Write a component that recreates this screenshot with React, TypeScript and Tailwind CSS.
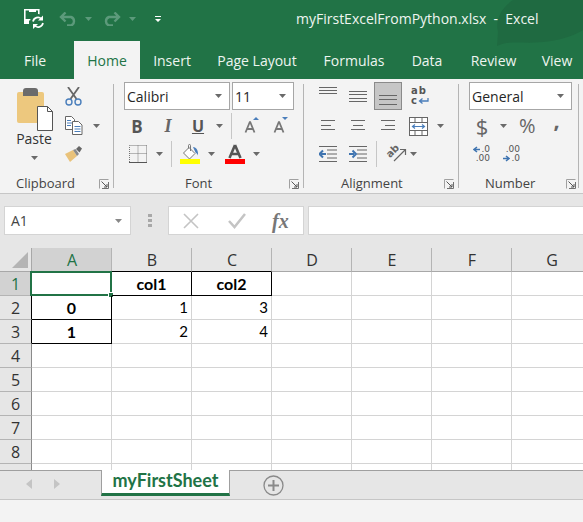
import React from 'react';

const columns = ['A', 'B', 'C', 'D', 'E', 'F', 'G'];
const tabs = [
  { label: 'File', width: 'w-[74px] pr-[4px]' },
  { label: 'Home', width: 'w-[66px]', active: true },
  { label: 'Insert', width: 'w-[64px]' },
  { label: 'Page Layout', width: 'w-[106px]' },
  { label: 'Formulas', width: 'w-[88px]' },
  { label: 'Data', width: 'w-[58px]' },
  { label: 'Review', width: 'w-[75px]' },
  { label: 'View', width: 'w-[52px]' },
];

// cell content per row, col index 0..6
const rows: Record<number, Record<number, { text: string; bold?: boolean; right?: boolean }>> = {
  1: { 1: { text: 'col1', bold: true }, 2: { text: 'col2', bold: true } },
  2: { 0: { text: '0', bold: true }, 1: { text: '1', right: true }, 2: { text: '3', right: true } },
  3: { 0: { text: '1', bold: true }, 1: { text: '2', right: true }, 2: { text: '4', right: true } },
};

const hasBlackEdge = (r: number, c: number) => (r === 1 && (c === 1 || c === 2)) || (c === 0 && (r === 2 || r === 3));

const Caret = ({ color = '#6a6a6a' }: { color?: string }) => (
  <svg width="7" height="4" viewBox="0 0 7 4" className="block">
    <path d="M0 0h7L3.5 4z" fill={color} />
  </svg>
);

const Launcher = () => (
  <svg width="10" height="10" viewBox="0 0 10 10" className="block">
    <path d="M.5 9.5v-9h9" fill="none" stroke="#a0a0a0" />
    <path d="M9.5 3v6.5H3" fill="none" stroke="#707070" />
    <path d="M2.500 2.500l5.500 5.500M8 5v3H5" fill="none" stroke="#555" />
  </svg>
);

const Separator = () => <div className="w-px h-[26px] bg-[#c6c6c6]" />;

const Group = ({ width, label, pad, children }: { width: string; label: string; pad: string; children: React.ReactNode }) => (
  <div className={`flex flex-col shrink-0 border-r border-[#b4b4b4] my-[5px] ${width}`}>
    <div className="h-[92px] shrink-0 -mt-[2px]">{children}</div>
    <div className={`flex items-center justify-between h-[19px] shrink-0 text-[13px] leading-none text-[#444] ${pad}`}>
      <span>{label}</span>
      <Launcher />
    </div>
  </div>
);

const Select = ({ width, text }: { width: string; text: string }) => (
  <div className={`flex items-center justify-between h-[28px] bg-white border border-[#a6a6a6] pl-[2px] pr-[7px] text-[14px] text-[#262626] ${width}`}>
    <span>{text}</span>
    <Caret />
  </div>
);

// each line is [y, x, width]
const Lines = ({ lines, width = 18, height = 24 }: { lines: [number, number, number][]; width?: number; height?: number }) => (
  <svg width={width} height={height} viewBox={`0 0 ${width} ${height}`} className="block">
    {lines.map(([y, x, w], i) => (
      <rect key={i} x={x} y={y} width={w} height="1" fill="#666" />
    ))}
  </svg>
);

const Scissors = () => (
  <svg width="18" height="19" viewBox="0 0 18 19" className="block">
    <path d="M3 0l8.500 12M14 0L5.500 12" stroke="#666" strokeWidth="1.800" fill="none" />
    <circle cx="4" cy="15" r="3" fill="none" stroke="#4a7ebb" strokeWidth="1.400" />
    <circle cx="13" cy="15" r="3" fill="none" stroke="#4a7ebb" strokeWidth="1.400" />
  </svg>
);

const CopyIcon = () => (
  <svg width="18" height="19" viewBox="0 0 18 19" className="block">
    <path d="M.5.5h6l3 3v10H.5z" fill="#fff" stroke="#666" />
    <path d="M7.500 5.500h6l3.500 3.500v9.500H7.500z" fill="#fff" stroke="#666" />
    <path d="M2 4.500h4M2 7h5M2 9.500h4" stroke="#4a7ebb" />
    <path d="M9.500 10.500h6M9.500 13h6M9.500 15.500h6" stroke="#4a7ebb" />
  </svg>
);

const Painter = () => (
  <svg width="18" height="17" viewBox="0 0 18 17" className="block">
    <path d="M0 8l5 8 7-6-4-6z" fill="#e9c27a" />
    <path d="M8 4l4 6 2-2-3.500-5z" fill="#8a8a8a" />
    <path d="M11 3l3-3 3 2.500-2.500 4z" fill="#666" />
  </svg>
);

const Borders = () => (
  <svg width="18" height="18" viewBox="0 0 18 18" className="block">
    <path d="M.5.5h17M.5 17V.5M17.500.5V17M.5 8.500h17M9 .5V17" stroke="#777" strokeDasharray="1 1" fill="none" />
    <path d="M0 17.500h18" stroke="#555" />
  </svg>
);

const FillColor = () => (
  <svg width="20" height="20" viewBox="0 0 20 20" className="block">
    <path d="M9 3.500l6 6-5.500 5.500L3.500 9z" fill="#fff" stroke="#777" />
    <path d="M8.500 4.500V1.500a1 1 0 012 0V7" fill="none" stroke="#777" />
    <path d="M13 3c3.500 .5 5.500 3.500 5 8.500-.8-2-1.500-2.500-2.500-3z" fill="#4a7ebb" />
    <rect y="15" width="20" height="5" fill="#ffff00" />
  </svg>
);

const FontColor = () => (
  <svg width="20" height="20" viewBox="0 0 20 20" className="block">
    <path d="M10 1l5.500 13M10 1L4.500 14M6.500 10h7" stroke="#555" strokeWidth="2.600" fill="none" />
    <rect y="15" width="20" height="5" fill="#ff0000" />
  </svg>
);

const GrowFont = ({ up }: { up?: boolean }) => (
  <svg width="18" height="18" viewBox="0 0 18 18" className="block">
    <path d="M6 4.500L1.500 15.500M6 4.500l4.500 11M3.500 12h5" stroke="#777" strokeWidth="1.800" fill="none" />
    {up ? <path d="M9 3l3-3 3 3z" fill="#4a7ebb" /> : <path d="M9 0h6l-3 3z" fill="#4a7ebb" />}
  </svg>
);

const WrapText = () => (
  <div className="relative w-[18px] h-[20px] mt-[4px] font-['DejaVu_Sans',sans-serif] text-[10px] leading-[10px] font-bold text-[#555]">
    <div className="tracking-[1px]">ab</div>
    <div>c</div>
    <svg width="11" height="7" viewBox="0 0 11 7" className="absolute right-0 bottom-[1px]">
      <path d="M10 0v3H2M4.500 .5L1.500 3l3 2.500" fill="none" stroke="#4a7ebb" strokeWidth="1.300" />
    </svg>
  </div>
);

const MergeIcon = () => (
  <svg width="19" height="19" viewBox="0 0 19 19" className="block">
    <rect x=".5" y=".5" width="18" height="18" fill="#fff" stroke="#666" />
    <path d="M0 5.500h19M0 13.500h19M6 0v5.500M13 0v5.500M6 13.500V19M13 13.500V19" stroke="#666" />
    <path d="M3.500 9.500h12M6 7.500l-2.500 2 2.500 2M13 7.500l2.500 2-2.500 2" fill="none" stroke="#4a7ebb" strokeWidth="1.200" />
  </svg>
);

const Indent = ({ flip }: { flip?: boolean }) => (
  <svg width="18" height="16" viewBox="0 0 18 16" className="block">
    <path d="M0 .5h18M8 4h10M8 8h10M8 12h10M0 15.500h18" stroke="#666" />
    {flip ? (
      <path d="M0 8h5M3.500 4.500L7 8l-3.500 3.500" fill="none" stroke="#3f74b0" strokeWidth="2" />
    ) : (
      <path d="M7 8H2M4 4.500L.5 8 4 11.500" fill="none" stroke="#3f74b0" strokeWidth="2" />
    )}
  </svg>
);

const Orientation = () => (
  <svg width="20" height="20" viewBox="0 0 20 20" className="block overflow-visible">
    <text x="0" y="11" fontSize="10" fontWeight="bold" fill="#666" fontFamily="DejaVu Sans, sans-serif" transform="rotate(-45 6 8)">ab</text>
    <path d="M8 17L19 6M14 5.500h5.500V11" fill="none" stroke="#666" strokeWidth="1.200" />
  </svg>
);

const Decimal = ({ increase }: { increase?: boolean }) => (
  <div className="flex flex-col items-end w-[16px] text-[9px] leading-[9px] font-['DejaVu_Sans',sans-serif] text-[#555]">
    <div className="flex items-center gap-[1px] h-[9px]">
      {!increase && (
        <svg width="7" height="7" viewBox="0 0 7 7">
          <path d="M7 3.500H1.500M4 1L1 3.500 4 6" fill="none" stroke="#3f74b0" strokeWidth="1.500" />
        </svg>
      )}
      <span>{increase ? '.00' : '.0'}</span>
    </div>
    <div className="flex items-center gap-[1px] h-[9px]">
      {increase && (
        <svg width="7" height="7" viewBox="0 0 7 7">
          <path d="M0 3.500h5.500M3 1l3 2.500L3 6" fill="none" stroke="#3f74b0" strokeWidth="1.500" />
        </svg>
      )}
      <span>{increase ? '.0' : '.00'}</span>
    </div>
  </div>
);

const Quick = () => (
  <div className="flex items-center h-[41px] pl-[24px] pb-[4px]">
    <svg width="20" height="20" viewBox="0 0 20 20" className="block">
      <path d="M.8.8h14v10H.8z" fill="none" stroke="#fff" strokeWidth="1.600" />
      <path d="M0 10h5v5H0zM5 0h7v3H5z" fill="#fff" />
      <circle cx="14" cy="13" r="8" fill="#217346" />
      <path d="M9 12.500a5 5 0 018.500-2.500M19 14a5 5 0 01-8.500 2.500" fill="none" stroke="#fff" strokeWidth="1.700" />
      <path d="M19 6.500v5h-5zM9 20v-5h5z" fill="#fff" />
    </svg>
    <svg width="18" height="14" viewBox="0 0 18 14" className="block ml-[15px]">
      <path d="M2 5h10a4.500 4.500 0 010 8.500H8M6.500 .5L2 5l4.500 4.500" fill="none" stroke="#5c9a7b" strokeWidth="2.400" />
    </svg>
    <div className="ml-[8px]"><Caret color="#5c9a7b" /></div>
    <svg width="18" height="14" viewBox="0 0 18 14" className="block ml-[11px]">
      <path d="M16 5H6a4.500 4.500 0 000 8.500h4M11.500 .5L16 5l-4.500 4.500" fill="none" stroke="#5c9a7b" strokeWidth="2.400" />
    </svg>
    <div className="ml-[8px]"><Caret color="#5c9a7b" /></div>
    <svg width="6" height="7" viewBox="0 0 6 7" className="block ml-[19px] mt-[1px]">
      <path d="M0 0h6v1H0zM0 3h6L3 6z" fill="#fff" />
    </svg>
  </div>
);

const Cell = ({ r, c }: { r: number; c: number }) => {
  const cell = rows[r]?.[c];
  const selected = r === 1 && c === 0;
  return (
    <div
      className={`relative flex items-center border-r border-b px-[3px] leading-none text-black font-['Lato',sans-serif]
        ${hasBlackEdge(r, c) ? 'border-r-black border-b-black' : 'border-r-[#d4d4d4] border-b-[#d4d4d4]'}
        ${cell?.right ? 'justify-end' : 'justify-center'}
        ${cell?.bold ? 'font-bold text-[16px]' : 'text-[15px]'}`}
    >
      {cell?.text}
      {selected && (
        <>
          <div className="absolute -left-[2px] -top-[1px] w-[82px] h-[25px] border-2 border-[#217346]" />
          <div className="absolute -right-[3px] -bottom-[3px] w-[6px] h-[6px] bg-[#217346] border border-white" />
        </>
      )}
    </div>
  );
};

export default function App() {
  return (
    <div className="flex flex-col w-[583px] h-[522px] overflow-hidden bg-[#f3f3f3] font-['Open_Sans',sans-serif]">
      {/* title + tabs */}
      <div className="relative h-[79px] bg-[#217346] shrink-0 overflow-hidden">
        <svg width="100" height="50" viewBox="0 0 100 50" className="absolute right-0 top-0">
          <path d="M30 0C18 8 12 20 15 32l-1 14c11-6 26-2 46-4 18-2 30-6 40-12V0z" fill="#1f6a41" />
        </svg>
        <div className="relative flex h-[41px]">
          <div className="w-[296px]"><Quick /></div>
          <div className="pt-[9px] text-[14px] leading-[20px] text-[#eef5f0] whitespace-pre">myFirstExcelFromPython.xlsx  -  Excel</div>
        </div>
        <div className="relative flex h-[38px]">
          {tabs.map((t) => (
            <div
              key={t.label}
              className={`flex items-center justify-center shrink-0 text-[14px] ${t.width} ${t.active ? 'bg-[#f3f3f3] text-[#217346]' : 'text-[#eef5f0]'}`}
            >
              {t.label}
            </div>
          ))}
        </div>
      </div>

      {/* ribbon */}
      <div className="flex h-[115px] shrink-0 border-b border-[#c6c6c6] bg-[#f3f3f3] text-[#444]">
        <Group width="w-[114px]" label="Clipboard" pad="pl-[16px] pr-[4px]">
          <div className="flex">
            <div className="flex flex-col items-center w-[62px] pl-[6px]">
              <div className="relative w-[35px] h-[42px] mt-[6px]">
                <div className="absolute left-0 top-[4px] w-[27px] h-[31px] rounded-[2px] bg-[#edc87e]" />
                <div className="absolute left-[6px] top-0 w-[15px] h-[8px] rounded-t-[3px] bg-[#6b6b6b]" />
                <svg width="16" height="25" viewBox="0 0 16 25" className="absolute right-[-1px] top-[18px]">
                  <path d="M.5.5h10l5 5v19H.5z" fill="#fff" stroke="#555" />
                  <path d="M10.500.5v5h5" fill="none" stroke="#555" />
                </svg>
              </div>
              <div className="text-[14px] leading-[18px] text-[#333]">Paste</div>
              <div className="mt-[8px]"><Caret /></div>
            </div>
            <div className="flex flex-col pl-[3px] pt-[5px] gap-[10px]">
              <Scissors />
              <div className="flex items-center gap-[10px]">
                <CopyIcon />
                <Caret />
              </div>
              <div className="mt-[1px]"><Painter /></div>
            </div>
          </div>
        </Group>

        <Group width="w-[190px]" label="Font" pad="pl-[71px] pr-[4px]">
          <div className="flex flex-col pl-[10px]">
            <div className="flex gap-[2px]">
              <Select width="w-[106px]" text="Calibri" />
              <Select width="w-[62px]" text="11" />
            </div>
            <div className="flex items-center h-[26px] mt-[3px]">
              <div className="w-[26px] text-center text-[17px] leading-none font-bold text-[#555]">B</div>
              <div className="ml-[5px] w-[26px] text-center text-[18px] leading-none italic font-bold text-[#666] font-['Liberation_Serif',serif]">I</div>
              <div className="ml-[4px] w-[26px] text-center text-[16px] leading-[18px] font-bold underline text-[#555]">U</div>
              <div className="ml-[5px]"><Caret /></div>
              <div className="ml-[8px]"><Separator /></div>
              <div className="ml-[12px]"><GrowFont up /></div>
              <div className="ml-[11px]"><GrowFont /></div>
            </div>
            <div className="flex items-center h-[30px]">
              <div className="ml-[5px]"><Borders /></div>
              <div className="ml-[9px]"><Caret /></div>
              <div className="ml-[8px]"><Separator /></div>
              <div className="ml-[8px]"><FillColor /></div>
              <div className="ml-[8px]"><Caret /></div>
              <div className="ml-[10px]"><FontColor /></div>
              <div className="ml-[8px]"><Caret /></div>
            </div>
          </div>
        </Group>

        <Group width="w-[155px]" label="Alignment" pad="pl-[37px] pr-[4px]">
          <div className="flex flex-col pl-[15px]">
            <div className="flex items-start h-[28px]">
              <Lines lines={[[5, 0, 18], [8, 0, 18], [11, 0, 18]]} />
              <div className="ml-[12px]"><Lines lines={[[9, 0, 18], [12, 0, 18], [16, 0, 18], [19, 0, 18]]} /></div>
              <div className="w-[28px] h-[28px] ml-[7px] pl-[4px] bg-[#c6c6c6] border border-[#8a8a8a]">
                <Lines lines={[[12, 0, 18], [16, 0, 18], [21, 0, 18]]} />
              </div>
              <div className="ml-[9px]"><WrapText /></div>
            </div>
            <div className="flex items-center h-[26px] mt-[3px] pl-[2px]">
              <Lines width={14} height={18} lines={[[3, 0, 14], [8, 0, 10], [12, 0, 14]]} />
              <div className="ml-[16px]"><Lines width={14} height={18} lines={[[3, 0, 14], [8, 2, 10], [12, 0, 14]]} /></div>
              <div className="ml-[16px]"><Lines width={14} height={18} lines={[[3, 0, 14], [8, 4, 10], [12, 0, 14]]} /></div>
              <div className="ml-[14px]"><MergeIcon /></div>
              <div className="ml-[9px]"><Caret /></div>
            </div>
            <div className="flex items-center h-[30px]">
              <Indent />
              <div className="ml-[12px]"><Indent flip /></div>
              <div className="ml-[9px]"><Separator /></div>
              <div className="ml-[9px]"><Orientation /></div>
              <div className="ml-[4px]"><Caret /></div>
            </div>
          </div>
        </Group>

        <Group width="w-[120px]" label="Number" pad="pl-[26px] pr-[2px]">
          <div className="flex flex-col pl-[10px]">
            <Select width="w-[103px]" text="General" />
            <div className="flex items-center h-[26px] mt-[3px]">
              <div className="w-[26px] text-center text-[22px] leading-none text-[#666]">$</div>
              <div className="ml-[5px]"><Caret /></div>
              <div className="ml-[12px] text-[20px] leading-none text-[#666]">%</div>
              <div className="ml-[18px] mb-[14px] text-[22px] leading-none font-bold text-[#666]">,</div>
            </div>
            <div className="flex items-center h-[30px] pl-[5px]">
              <Decimal />
              <div className="ml-[14px]"><Decimal increase /></div>
            </div>
          </div>
        </Group>
      </div>

      {/* formula bar */}
      <div className="flex items-start h-[54px] shrink-0 pt-[12px] pl-[4px] bg-[#e6e6e6]">
        <div className="flex items-center justify-between w-[127px] h-[29px] bg-white border border-[#d4d4d4] pl-[6px] pr-[8px] text-[14px] text-[#444]">
          <span>A1</span>
          <Caret color="#888" />
        </div>
        <div className="flex flex-col gap-[2px] ml-[17px] mt-[8px]">
          <div className="w-[4px] h-[3px] bg-[#a8a8a8]" />
          <div className="w-[4px] h-[3px] bg-[#a8a8a8]" />
          <div className="w-[4px] h-[3px] bg-[#a8a8a8]" />
        </div>
        <div className="flex items-center w-[136px] h-[29px] ml-[16px] bg-white border border-[#d4d4d4]">
          <svg width="16" height="16" viewBox="0 0 16 16" className="block ml-[14px]">
            <path d="M1 1l14 14M15 1L1 15" stroke="#c4c4c4" strokeWidth="1.600" />
          </svg>
          <svg width="18" height="16" viewBox="0 0 18 16" className="block ml-[29px]">
            <path d="M1 8l5.500 6L17 1" fill="none" stroke="#c4c4c4" strokeWidth="2.500" />
          </svg>
          <div className="ml-[26px] font-['Liberation_Serif',serif] italic font-bold text-[20px] leading-none text-[#777]">fx</div>
        </div>
        <div className="flex-1 h-[29px] ml-[4px] bg-white border-y border-l border-[#d4d4d4]" />
      </div>

      {/* grid */}
      <div className="grid grid-cols-[32px_repeat(7,80px)] grid-rows-[24px_repeat(9,24px)] h-[222px] shrink-0 overflow-hidden bg-white">
        <div className="relative bg-[#e6e6e6] border-r border-b border-[#a8a8a8]">
          <svg width="16" height="16" viewBox="0 0 16 16" className="absolute left-[12px] top-[4px]">
            <path d="M16 0v16H0z" fill="#b4b4b4" />
          </svg>
        </div>
        {columns.map((col, c) => (
          <div
            key={col}
            className={`flex items-center justify-center pl-[1px] border-r border-b text-[16px] leading-none
              ${c === 0 ? 'bg-[#d2d2d2] text-[#217346] border-b-[#217346]' : 'bg-[#e6e6e6] text-[#333]'}
              ${c === 1 || c === 2 ? 'border-b-black' : c > 2 ? 'border-b-[#a8a8a8]' : ''}
              border-r-[#b4b4b4]`}
          >
            {col}
          </div>
        ))}
        {[1, 2, 3, 4, 5, 6, 7, 8, 9].map((r) => (
          <React.Fragment key={r}>
            <div
              className={`flex items-center justify-center border-b border-r text-[16px] leading-none border-b-[#b4b4b4]
                ${r === 1 ? 'bg-[#d2d2d2] text-[#217346] border-r-[#217346]' : 'bg-[#e6e6e6] text-[#333]'}
                ${r === 2 || r === 3 ? 'border-r-black' : r === 1 ? '' : 'border-r-[#8a8a8a]'}`}
            >
              {r < 9 ? r : ''}
            </div>
            {columns.map((_, c) => (
              <Cell key={c} r={r} c={c} />
            ))}
          </React.Fragment>
        ))}
      </div>

      {/* sheet tabs */}
      <div className="flex items-start h-[30px] shrink-0 bg-[#e6e6e6] border-y border-t-[#9f9f9f] border-b-[#c6c6c6]">
        <div className="flex items-center w-[101px] h-[25px] pl-[26px] gap-[22px]">
          <svg width="6" height="10" viewBox="0 0 6 10" className="block"><path d="M6 0v10L0 5z" fill="#c4c4c4" /></svg>
          <svg width="6" height="10" viewBox="0 0 6 10" className="block"><path d="M0 0v10l6-5z" fill="#c4c4c4" /></svg>
        </div>
        <div className="flex items-center justify-center w-[129px] h-[26px] -mt-px pb-[3px] bg-white border-x border-b-[3px] border-x-[#9f9f9f] border-b-[#217346] text-[18px] leading-none font-bold text-[#217346] font-['Lato',sans-serif]">
          myFirstSheet
        </div>
        <svg width="21" height="21" viewBox="0 0 21 21" className="block ml-[33px] mt-[4px]">
          <circle cx="10.500" cy="10.500" r="9.500" fill="none" stroke="#8a8a8a" strokeWidth="1.300" />
          <path d="M10.500 5v11M5 10.500h11" stroke="#8a8a8a" strokeWidth="2" />
        </svg>
      </div>
      <div className="flex-1 bg-[#f3f3f3]" />
    </div>
  );
}
